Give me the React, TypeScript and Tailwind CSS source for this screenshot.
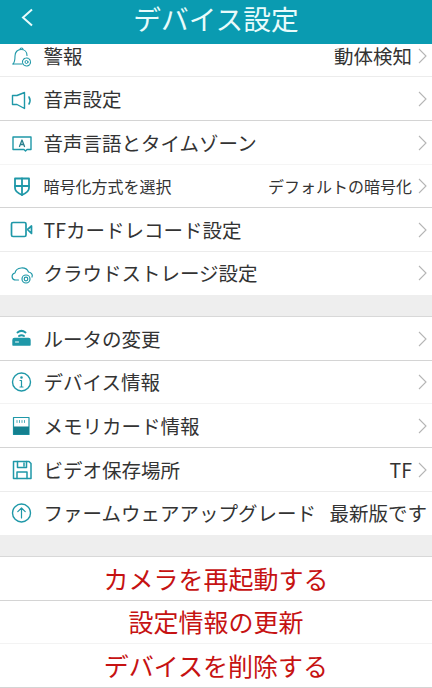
import type { ReactNode } from "react";

type Row = {
  icon: ReactNode;
  label: string;
  value?: string;
  small?: boolean;
  height: string;
  line: string;
  noChevron?: boolean;
};

const stroke = "#1f98a8";

function Icon({ children }: { children: ReactNode }) {
  return (
    <svg width="24" height="24" viewBox="0 0 24 24" fill="none" stroke={stroke} strokeWidth="1.400" strokeLinecap="round" strokeLinejoin="round" className="shrink-0">
      {children}
    </svg>
  );
}

const bell = (
  <Icon>
    <path d="M3 20c2-2 2-4 2-8 0-4 2.500-6.500 6-6.500s6 2.500 6 6" strokeWidth="1.100" />
    <path d="M3 20h9" strokeWidth="1.100" />
    <path d="M10 5.500c0-2 3-2 3 0" strokeWidth="1.100" />
    <circle cx="16.500" cy="18" r="1.500" strokeWidth="1" />
    <circle cx="16.500" cy="18" r="4" strokeDasharray="2 1" strokeWidth="1.100" />
  </Icon>
);

const speaker = (
  <Icon>
    <path d="M2.500 8.500h4.500L14.500 5.500v16L7 17.500H2.500z" />
    <path d="M19 10c1.200 2 1.200 5 0 7" strokeWidth="1.600" />
  </Icon>
);

const langBox = (
  <Icon>
    <path d="M3 6h18v12.500h-4l-1.500 1.500-1.500-1.500H3z" />
    <path d="M9.500 15.500l2.500-6.500 2.500 6.500M10.300 13.500h3.400" strokeWidth="1.300" stroke="#2b7f8c" />
  </Icon>
);

const shield = (
  <Icon>
    <path d="M5 4.500h14v9.500c0 3.500-3.500 5.500-7 7-3.500-1.500-7-3.500-7-7z" strokeWidth="1.800" />
    <path d="M12 4.500v16.500M5 12h14" strokeWidth="1.800" />
  </Icon>
);

const video = (
  <Icon>
    <rect x="1.500" y="4.500" width="14.500" height="14" rx="1.500" strokeWidth="1.700" />
    <path d="M17.500 11.500l4-3.500v7.500z" strokeWidth="1.700" />
  </Icon>
);

const cloud = (
  <Icon>
    <path d="M8.500 19H6c-5 0-5-6-1-7 1-6 11-7 13.500-1 3 .5 4.500 3 3.500 5" strokeWidth="1.200" />
    <circle cx="16" cy="18" r="4" strokeWidth="1.200" />
    <circle cx="16" cy="18" r="1.800" strokeWidth="1.200" />
  </Icon>
);

const router = (
  <Icon>
    <path d="M7.500 5.500c2.500-2 5.500-2 8 0" strokeWidth="2" />
    <path d="M9 9c1.500-1 3.500-1 5 0" strokeWidth="2" />
    <path d="M3 13c0-1 .5-1.500 1.500-1.500h14c1 0 1.500.5 1.500 1.500v5H3z" fill={stroke} />
    <path d="M5.500 15h3" stroke="#fff" strokeWidth="1" />
  </Icon>
);

const info = (
  <Icon>
    <circle cx="11.500" cy="12" r="9" />
    <path d="M11.500 10.500V17M10 10.500h1.500M10 17h3" strokeWidth="1.200" />
    <circle cx="11.500" cy="7.500" r=".6" fill={stroke} />
  </Icon>
);

const memory = (
  <Icon>
    <path d="M3.500 3.500h15.500v17H3.500z" strokeWidth="1.200" />
    <rect x="3.500" y="12.500" width="15.500" height="8" fill="#14808f" stroke="none" />
    <path d="M7 6.500v2M9.500 6.500v2M12 6.500v2M14.500 6.500v2" strokeWidth=".8" />
  </Icon>
);

const floppy = (
  <Icon>
    <path d="M3.500 3.500h15.500l2 2v15H3.500z" strokeWidth="1.500" />
    <path d="M7.500 3.500v6h9v-6M14 5v3" strokeWidth="1.500" />
    <path d="M7 20.500v-6.500h10v6.500" strokeWidth="1.500" />
  </Icon>
);

const upgrade = (
  <Icon>
    <circle cx="11.500" cy="12" r="9" />
    <path d="M11.500 17V7M7.800 10.700l3.700-3.700 3.700 3.700" strokeWidth="1.200" />
  </Icon>
);

const firstGroup: Row[] = [
  { icon: bell, label: "警報", value: "動体検知", height: "h-[33px]", line: "border-[#ececec]" },
  { icon: speaker, label: "音声設定", height: "h-[44px]", line: "border-[#d4d4d4]" },
  { icon: langBox, label: "音声言語とタイムゾーン", height: "h-[44px]", line: "border-[#f5f5f5]" },
  { icon: shield, label: "暗号化方式を選択", value: "デフォルトの暗号化", small: true, height: "h-[43px]", line: "border-[#d4d4d4]" },
  { icon: video, label: "TFカードレコード設定", height: "h-[44px]", line: "border-[#ececec]" },
  { icon: cloud, label: "クラウドストレージ設定", height: "h-[43px]", line: "border-transparent" },
];

const secondGroup: Row[] = [
  { icon: router, label: "ルータの変更", height: "h-[44px]", line: "border-[#d4d4d4]" },
  { icon: info, label: "デバイス情報", height: "h-[43px]", line: "border-[#f3f3f3]" },
  { icon: memory, label: "メモリカード情報", height: "h-[44px]", line: "border-[#d4d4d4]" },
  { icon: floppy, label: "ビデオ保存場所", value: "TF", height: "h-[44px]", line: "border-[#ececec]" },
  { icon: upgrade, label: "ファームウェアアップグレード", value: "最新版です", noChevron: true, height: "h-[43px]", line: "border-transparent" },
];

function SettingRow({ row, first }: { row: Row; first?: boolean }) {
  const size = row.small ? "text-[16px]" : "text-[19.5px]";
  const leading = first ? "leading-[20px]" : "leading-[26px]";
  return (
    <div className={`flex ${first ? "items-end" : "items-center"} ${row.height} overflow-hidden border-b ${row.line} pl-[10px] pr-[5px]`}>
      <div className={`flex w-full items-center ${first ? "pb-[8px]" : ""}`}>
        {row.icon}
        <span className={`ml-[9.500px] whitespace-nowrap text-[#333] ${size} ${leading}`}>{row.label}</span>
        <span className={`ml-auto whitespace-nowrap text-[#333] ${size} ${leading}`}>{row.value}</span>
        {!row.noChevron && (
          <svg width="10" height="16" viewBox="0 0 10 16" fill="none" stroke="#b5b5b5" strokeWidth="1.100" className="ml-[5px] shrink-0">
            <path d="M2 1l7 7-7 7" />
          </svg>
        )}
      </div>
    </div>
  );
}

export default function App() {
  return (
    <div className="flex h-[688px] w-[432px] flex-col overflow-hidden bg-white font-['Noto_Sans_CJK_JP','Noto_Sans',sans-serif]">
      <div className="relative flex h-[44px] shrink-0 items-center justify-center bg-[#0a9bb1] text-[27.7px] text-[#e8fbfb]">
        <svg width="14" height="20" viewBox="0 0 14 20" fill="none" stroke="#e8fbfb" strokeWidth="2" className="absolute left-[20px] top-[8px]">
          <path d="M12 1.500L3 9.500l9 8" />
        </svg>
        <span className="pb-[9px] leading-[30px]">デバイス設定</span>
      </div>

      <div>
        {firstGroup.map((r, i) => (
          <SettingRow key={r.label} row={r} first={i === 0} />
        ))}
      </div>
      <div className="h-[23px] border-b border-[#d8d8d8] bg-[#eeeeee]" />
      <div>
        {secondGroup.map((r) => (
          <SettingRow key={r.label} row={r} />
        ))}
      </div>
      <div className="h-[23px] border-b border-[#d8d8d8] bg-[#eeeeee]" />

      <div className="text-center text-[25px] text-[#c61212]">
        <div className="flex h-[44px] items-center justify-center border-b border-[#d4d4d4]">カメラを再起動する</div>
        <div className="flex h-[43px] items-center justify-center border-b border-[#f3f3f3]">設定情報の更新</div>
        <div className="flex h-[44px] items-center justify-center border-b border-[#d4d4d4]">デバイスを削除する</div>
      </div>
    </div>
  );
}
